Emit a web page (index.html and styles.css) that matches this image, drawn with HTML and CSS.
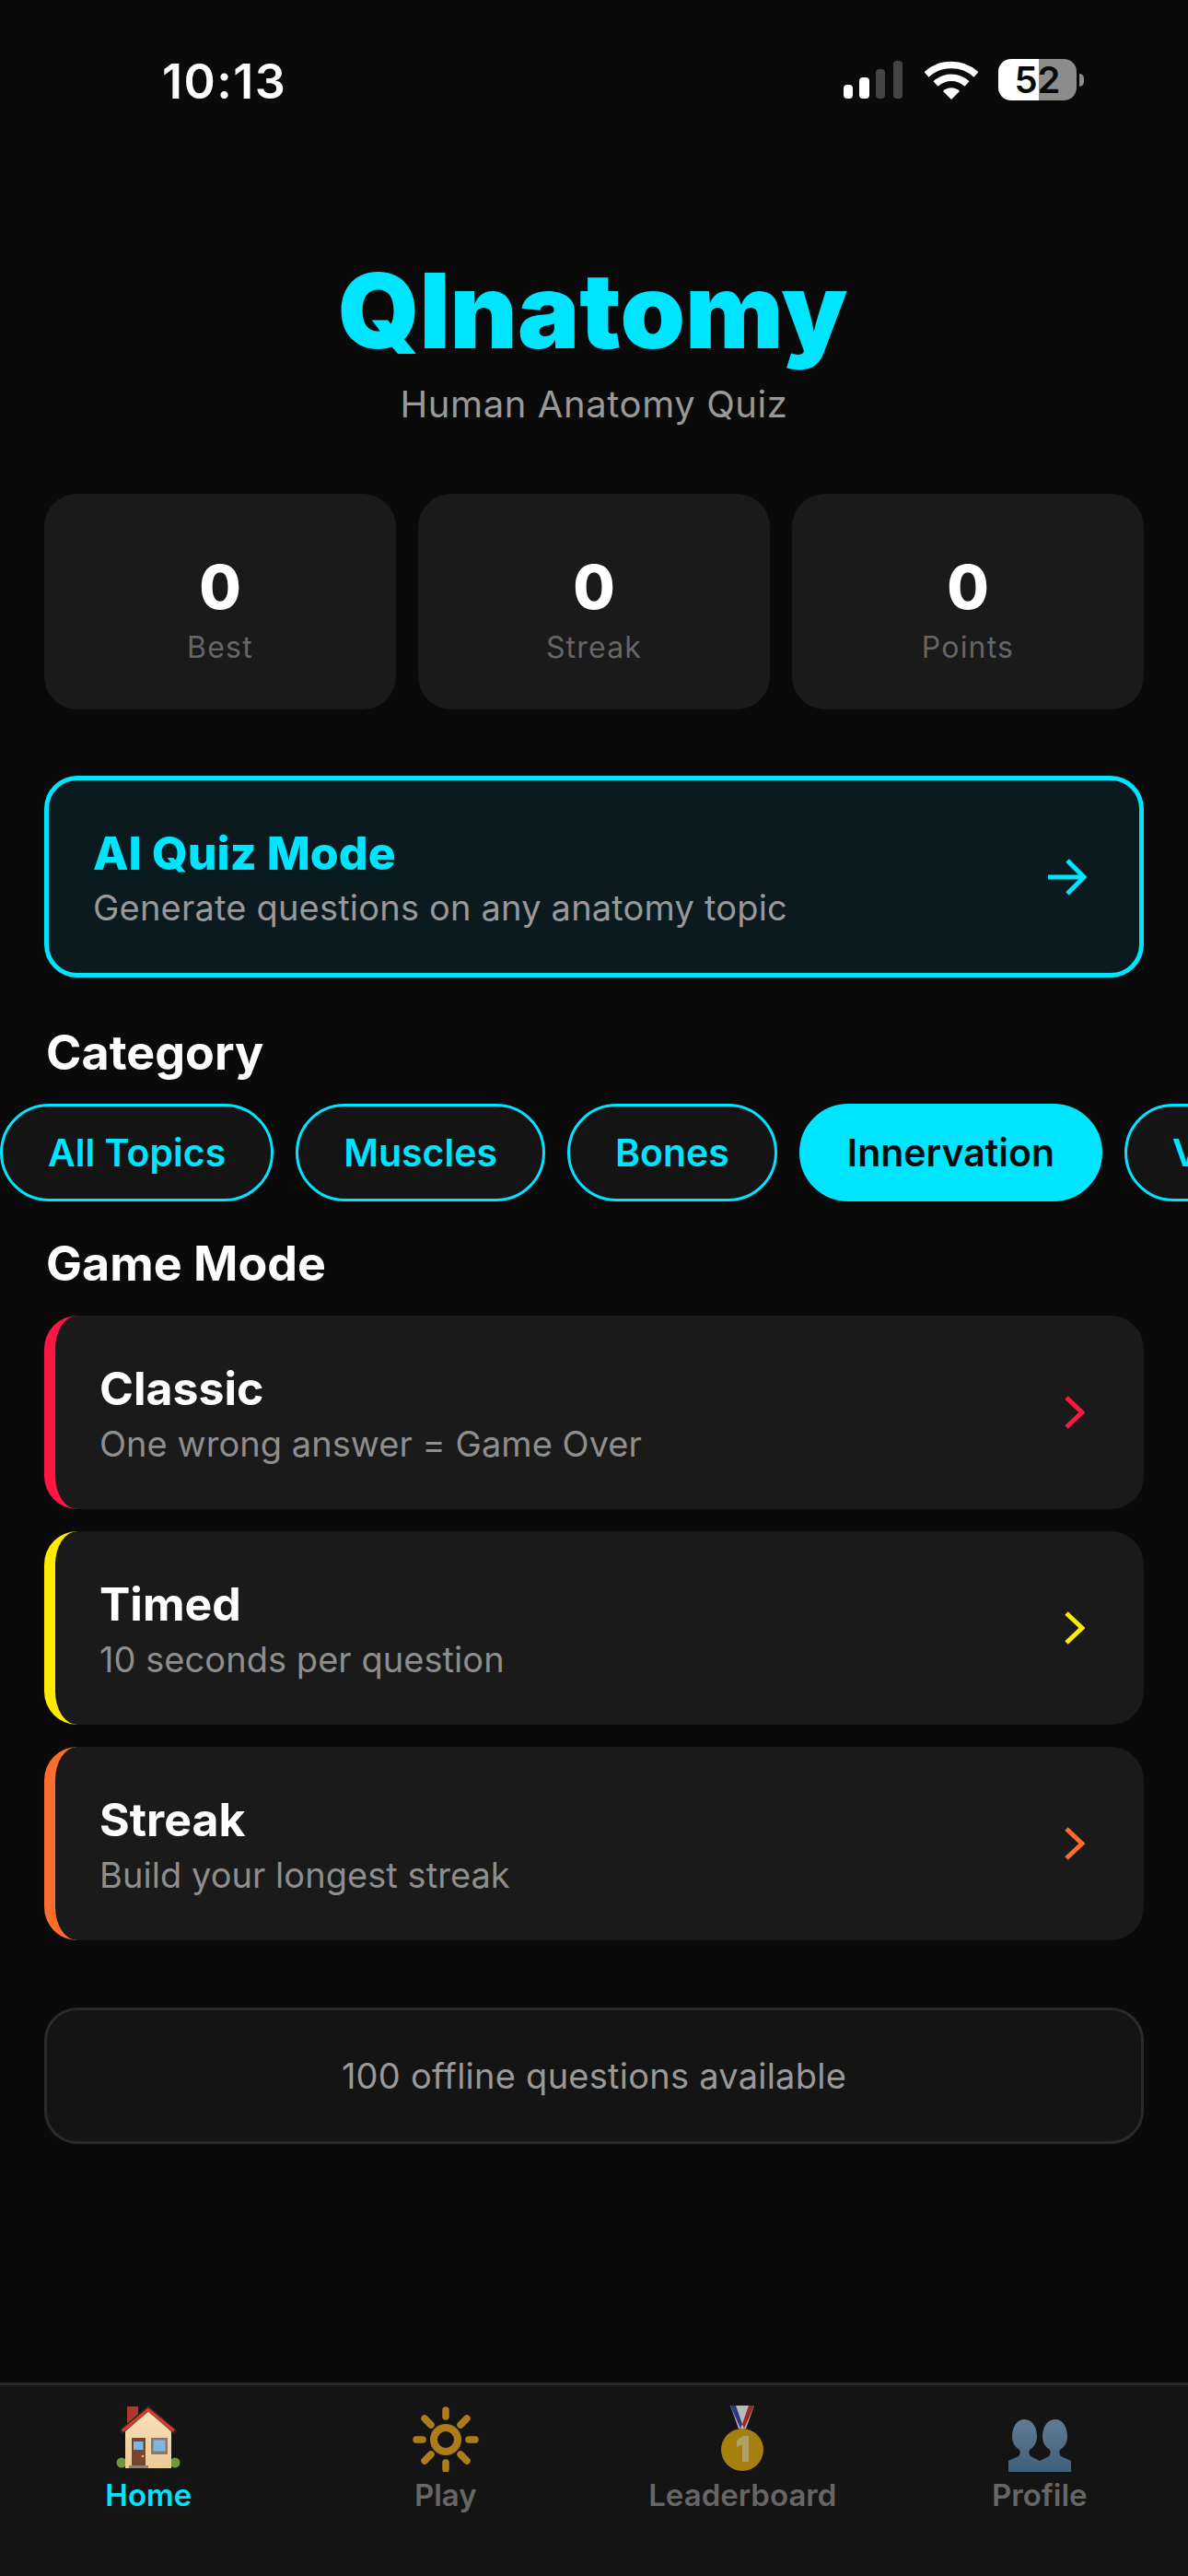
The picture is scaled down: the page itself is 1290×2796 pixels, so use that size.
FILE: index.html
```html
<!DOCTYPE html>
<html lang="en">
<head>
  <meta charset="UTF-8">
  <meta name="viewport" content="width=device-width, initial-scale=1.0">
  <title>QInatomy</title>
  <link rel="stylesheet" href="styles.css">
</head>
<body>
  <div class="page">

    <!-- Status bar -->
    <div class="status-bar">
      <span class="time">10:13</span>
      <div class="status-icons">
        <svg class="signal" viewBox="0 0 64 41" width="64" height="41">
          <rect x="0" y="26" width="10" height="15" rx="4" fill="#fff"/>
          <rect x="17" y="18" width="11" height="23" rx="4" fill="#fff"/>
          <rect x="35" y="9" width="10" height="32" rx="4" fill="#444"/>
          <rect x="54" y="0" width="10" height="41" rx="4" fill="#444"/>
        </svg>
        <svg class="wifi" viewBox="0 0 58 42" width="58" height="42">
          <path d="M2 15 C17 1 41 1 56 15" fill="none" stroke="#fff" stroke-width="7.5"/>
          <path d="M12 25 C22 16 36 16 46 25" fill="none" stroke="#fff" stroke-width="7.5"/>
          <path d="M29 42 L20 33 C25 28 33 28 38 33 Z" fill="#fff"/>
        </svg>
        <div class="battery">
          <div class="battery-body"><span>52</span></div>
          <div class="battery-tip"></div>
        </div>
      </div>
    </div>

    <main class="content">
      <header class="app-header">
        <h1>QInatomy</h1>
        <p>Human Anatomy Quiz</p>
      </header>

      <section class="stats">
        <div class="stat"><div class="stat-value">0</div><div class="stat-label">Best</div></div>
        <div class="stat"><div class="stat-value">0</div><div class="stat-label">Streak</div></div>
        <div class="stat"><div class="stat-value">0</div><div class="stat-label">Points</div></div>
      </section>

      <div class="ai-card">
        <div>
          <div class="ai-title">AI Quiz Mode</div>
          <div class="ai-sub">Generate questions on any anatomy topic</div>
        </div>
        <svg viewBox="0 0 44 40" width="44" height="40" fill="none" stroke="#00e5ff" stroke-width="5">
          <path d="M2 20 H40 M23 2 L41 20 L23 38"/>
        </svg>
      </div>

      <h2 class="section-title">Category</h2>
      <div class="pills">
        <div class="pill">All Topics</div>
        <div class="pill">Muscles</div>
        <div class="pill">Bones</div>
        <div class="pill active">Innervation</div>
        <div class="pill">Vascular</div>
      </div>

      <h2 class="section-title mode-title">Game Mode</h2>
      <div class="modes">
        <div class="mode classic">
          <div>
            <div class="mode-name">Classic</div>
            <div class="mode-sub">One wrong answer = Game Over</div>
          </div>
          <svg class="chevron" viewBox="0 0 22 36" width="22" height="36"><path d="M2 2 L19 18 L2 34"/></svg>
        </div>
        <div class="mode timed">
          <div>
            <div class="mode-name">Timed</div>
            <div class="mode-sub">10 seconds per question</div>
          </div>
          <svg class="chevron" viewBox="0 0 22 36" width="22" height="36"><path d="M2 2 L19 18 L2 34"/></svg>
        </div>
        <div class="mode streak">
          <div>
            <div class="mode-name">Streak</div>
            <div class="mode-sub">Build your longest streak</div>
          </div>
          <svg class="chevron" viewBox="0 0 22 36" width="22" height="36"><path d="M2 2 L19 18 L2 34"/></svg>
        </div>
      </div>

      <div class="offline">100 offline questions available</div>
    </main>

    <!-- Bottom tabs -->
    <nav class="tabs">
      <div class="tab active">
        <svg class="tab-icon" viewBox="0 0 72 72" width="72" height="72">
          <defs>
            <linearGradient id="wall" x1="0" y1="0" x2="0" y2="1">
              <stop offset="0" stop-color="#f8e0b8"/>
              <stop offset="1" stop-color="#eccb96"/>
            </linearGradient>
          </defs>
          <circle cx="7" cy="62" r="5.5" fill="#6f9a3a"/>
          <circle cx="65" cy="62" r="5.5" fill="#6f9a3a"/>
          <rect x="13" y="1" width="12" height="20" fill="#a83a2e"/>
          <path d="M11 27 L36 6 L61 27 V68 H11 Z" fill="url(#wall)"/>
          <path d="M6 29 L36 3 L66 29" fill="none" stroke="#2e2522" stroke-width="5"/>
          <path d="M8 27.5 L36 4.5 L64 27.5" fill="none" stroke="#d63c2e" stroke-width="3.5"/>
          <rect x="18" y="35" width="15" height="30" fill="#7a452c"/>
          <rect x="20" y="39" width="10.5" height="9" fill="#7cb6e6"/>
          <circle cx="30" cy="55" r="1.3" fill="#f4c430"/>
          <rect x="39" y="35" width="18" height="18" fill="#8f7562"/>
          <rect x="41.5" y="37.5" width="13" height="12" fill="#7cb6e6"/>
          <rect x="15" y="65" width="21" height="3" fill="#8b8378"/>
        </svg>
        <span>Home</span>
      </div>
      <div class="tab">
        <svg class="tab-icon" viewBox="0 0 72 72" width="72" height="72" fill="none" stroke="#f0a81c">
          <circle cx="36" cy="37" r="13" stroke-width="8"/>
          <g stroke-width="7.5" stroke-linecap="round">
            <path d="M36 5 V12 M36 62 V69 M4 37 H11 M61 37 H68"/>
            <path d="M13 14 L20 21 M52 53 L59 60 M59 14 L52 21 M20 53 L13 60"/>
          </g>
        </svg>
        <span>Play</span>
      </div>
      <div class="tab">
        <svg class="tab-icon" viewBox="0 0 72 72" width="72" height="72">
          <path d="M23 0 H49 L40 25 H32 Z" fill="#fff"/>
          <path d="M23 0 H29 L36 20 L34 25 Z" fill="#3848b8"/>
          <path d="M49 0 H43 L36 20 L38 25 Z" fill="#d8322c"/>
          <circle cx="36" cy="48" r="23" fill="#e4ae0e"/>
          <path d="M37 33 H43 V61 H36 V42 L30 45 V38 Z" fill="#f5dc90"/>
        </svg>
        <span>Leaderboard</span>
      </div>
      <div class="tab">
        <svg class="tab-icon" viewBox="0 0 72 72" width="72" height="72">
          <defs>
            <linearGradient id="bust" x1="0" y1="0" x2="0" y2="1">
              <stop offset="0" stop-color="#7fa8cc"/>
              <stop offset="1" stop-color="#527fa8"/>
            </linearGradient>
          </defs>
          <path fill="url(#bust)" d="M2 72 V60 L13 55 C15 53 15 50 14 48 C9 45 6 40 6 34 C6 22 12 15 19 15 C27 15 33 22 33 34 C33 40 30 45 25 48 C24 50 24 53 26 55 L36 60 L46 55 C48 53 48 50 47 48 C42 45 39 40 39 34 C39 22 45 15 53 15 C60 15 66 22 66 34 C66 40 63 45 58 48 C57 50 57 53 59 55 L70 60 V72 Z"/>
        </svg>
        <span>Profile</span>
      </div>
    </nav>
  </div>
</body>
</html>
```

FILE: styles.css
```css
* {
  box-sizing: border-box;
}

body {
  margin: 0;
  background-color: #0a0a0a;
  color: #fff;
  font-family: 'Inter', 'Liberation Sans', sans-serif;
}

.page {
  width: 1290px;
  height: 2796px;
  display: flex;
  flex-direction: column;
  overflow: hidden;
}

/* status bar */
.status-bar {
  height: 170px;
  flex: none;
  display: flex;
  justify-content: space-between;
  align-items: flex-start;
  padding: 58px 113px 0 176px;
}
.time {
  font-size: 52px;
  line-height: 62px;
  font-weight: 600;
  letter-spacing: 1.5px;
}
.status-icons {
  display: flex;
  align-items: center;
  gap: 22px;
  padding-top: 6px;
}
.signal {
  margin-right: 2px;
}
.battery {
  display: flex;
  align-items: center;
  gap: 3px;
}
.battery-body {
  width: 85px;
  height: 45px;
  border-radius: 14px;
  background: linear-gradient(to right, #fff 52%, #8c8c8c 52%);
  color: #0a0a0a;
  font-size: 40px;
  font-weight: 600;
  line-height: 45px;
  text-align: center;
}
.battery-tip {
  width: 5px;
  height: 14px;
  border-radius: 0 8px 8px 0;
  background-color: #8c8c8c;
}

.content {
  flex: 1;
  padding: 102px 48px 0;
}

/* header */
.app-header {
  text-align: center;
  margin-bottom: 74px;
}
.app-header h1 {
  margin: 0;
  padding-right: 3px;
  font-size: 113px;
  line-height: 130px;
  font-weight: 900;
  color: #00e5ff;
}
.app-header p {
  margin: 14px 0 0;
  font-size: 40px;
  line-height: 46px;
  letter-spacing: 0.6px;
  color: #999;
}

/* stats */
.stats {
  display: grid;
  grid-template-columns: repeat(3, 1fr);
  gap: 24px;
  margin-bottom: 72px;
}
.stat {
  height: 234px;
  padding-top: 13px;
  background-color: #1a1a1a;
  border-radius: 36px;
  display: flex;
  flex-direction: column;
  align-items: center;
  justify-content: center;
}
.stat-value {
  font-size: 66px;
  line-height: 80px;
  font-weight: 800;
}
.stat-label {
  margin-top: 6px;
  font-size: 32px;
  line-height: 40px;
  letter-spacing: 1.2px;
  color: #666;
}

/* ai card */
.ai-card {
  height: 219px;
  border: 5px solid #00e5ff;
  border-radius: 36px;
  background-color: #0a1a1f;
  display: flex;
  align-items: center;
  justify-content: space-between;
  padding: 0 57px 0 48px;
  margin-bottom: 50px;
}
.ai-title {
  font-size: 50px;
  line-height: 60px;
  font-weight: 800;
  color: #00e5ff;
  margin-bottom: 6px;
}
.ai-sub {
  font-size: 38px;
  line-height: 46px;
  letter-spacing: 0.2px;
  color: #999;
}

/* category */
.section-title {
  margin: 0;
  padding-left: 2px;
  font-size: 52px;
  line-height: 64px;
  font-weight: 700;
}
.pills {
  display: flex;
  gap: 24px;
  margin: 23px -48px 36px;
  overflow: hidden;
}
.pill {
  flex: none;
  height: 106px;
  line-height: 100px;
  padding: 0 49px;
  border: 3px solid #00e5ff;
  border-radius: 53px;
  background-color: #141414;
  color: #00e5ff;
  font-size: 41px;
  font-weight: 600;
}
.pill.active {
  background-color: #00e5ff;
  color: #0a0a0a;
}

/* game modes */
.mode-title {
  margin-bottom: 24px;
}
.modes {
  display: flex;
  flex-direction: column;
  gap: 24px;
}
.mode {
  height: 210px;
  background-color: #1a1a1a;
  border-left: 12px solid;
  border-radius: 36px;
  display: flex;
  align-items: center;
  justify-content: space-between;
  padding: 0 64px 0 48px;
}
.classic {
  border-left-color: #ff1744;
}
.timed {
  border-left-color: #ffea00;
}
.streak {
  border-left-color: #ff6d2d;
}
.chevron {
  fill: none;
  stroke-width: 5;
}
.classic .chevron {
  stroke: #ff1744;
}
.timed .chevron {
  stroke: #ffea00;
}
.streak .chevron {
  stroke: #ff6d2d;
}
.mode-name {
  font-size: 50px;
  line-height: 60px;
  font-weight: 700;
  margin-bottom: 7px;
}
.mode-sub {
  font-size: 38px;
  line-height: 46px;
  letter-spacing: 0.05px;
  color: #8e8e8e;
}

.offline {
  margin-top: 73px;
  height: 148px;
  line-height: 142px;
  border: 3px solid #2a2a2a;
  border-radius: 36px;
  background-color: #141414;
  text-align: center;
  font-size: 38px;
  letter-spacing: 0.25px;
  color: #999;
}

/* tabs */
.tabs {
  flex: none;
  height: 210px;
  border-top: 3px solid #2a2a2a;
  background-color: #141414;
  display: grid;
  grid-template-columns: repeat(4, 1fr);
  padding-top: 22px;
}
.tab {
  display: flex;
  flex-direction: column;
  align-items: center;
  font-size: 33px;
  line-height: 40px;
  font-weight: 600;
  color: #666;
}
.tab-icon {
  opacity: 0.7;
  margin-bottom: 5px;
}
.tab.active {
  color: #00e5ff;
}
.tab.active .tab-icon {
  opacity: 1;
}
```
